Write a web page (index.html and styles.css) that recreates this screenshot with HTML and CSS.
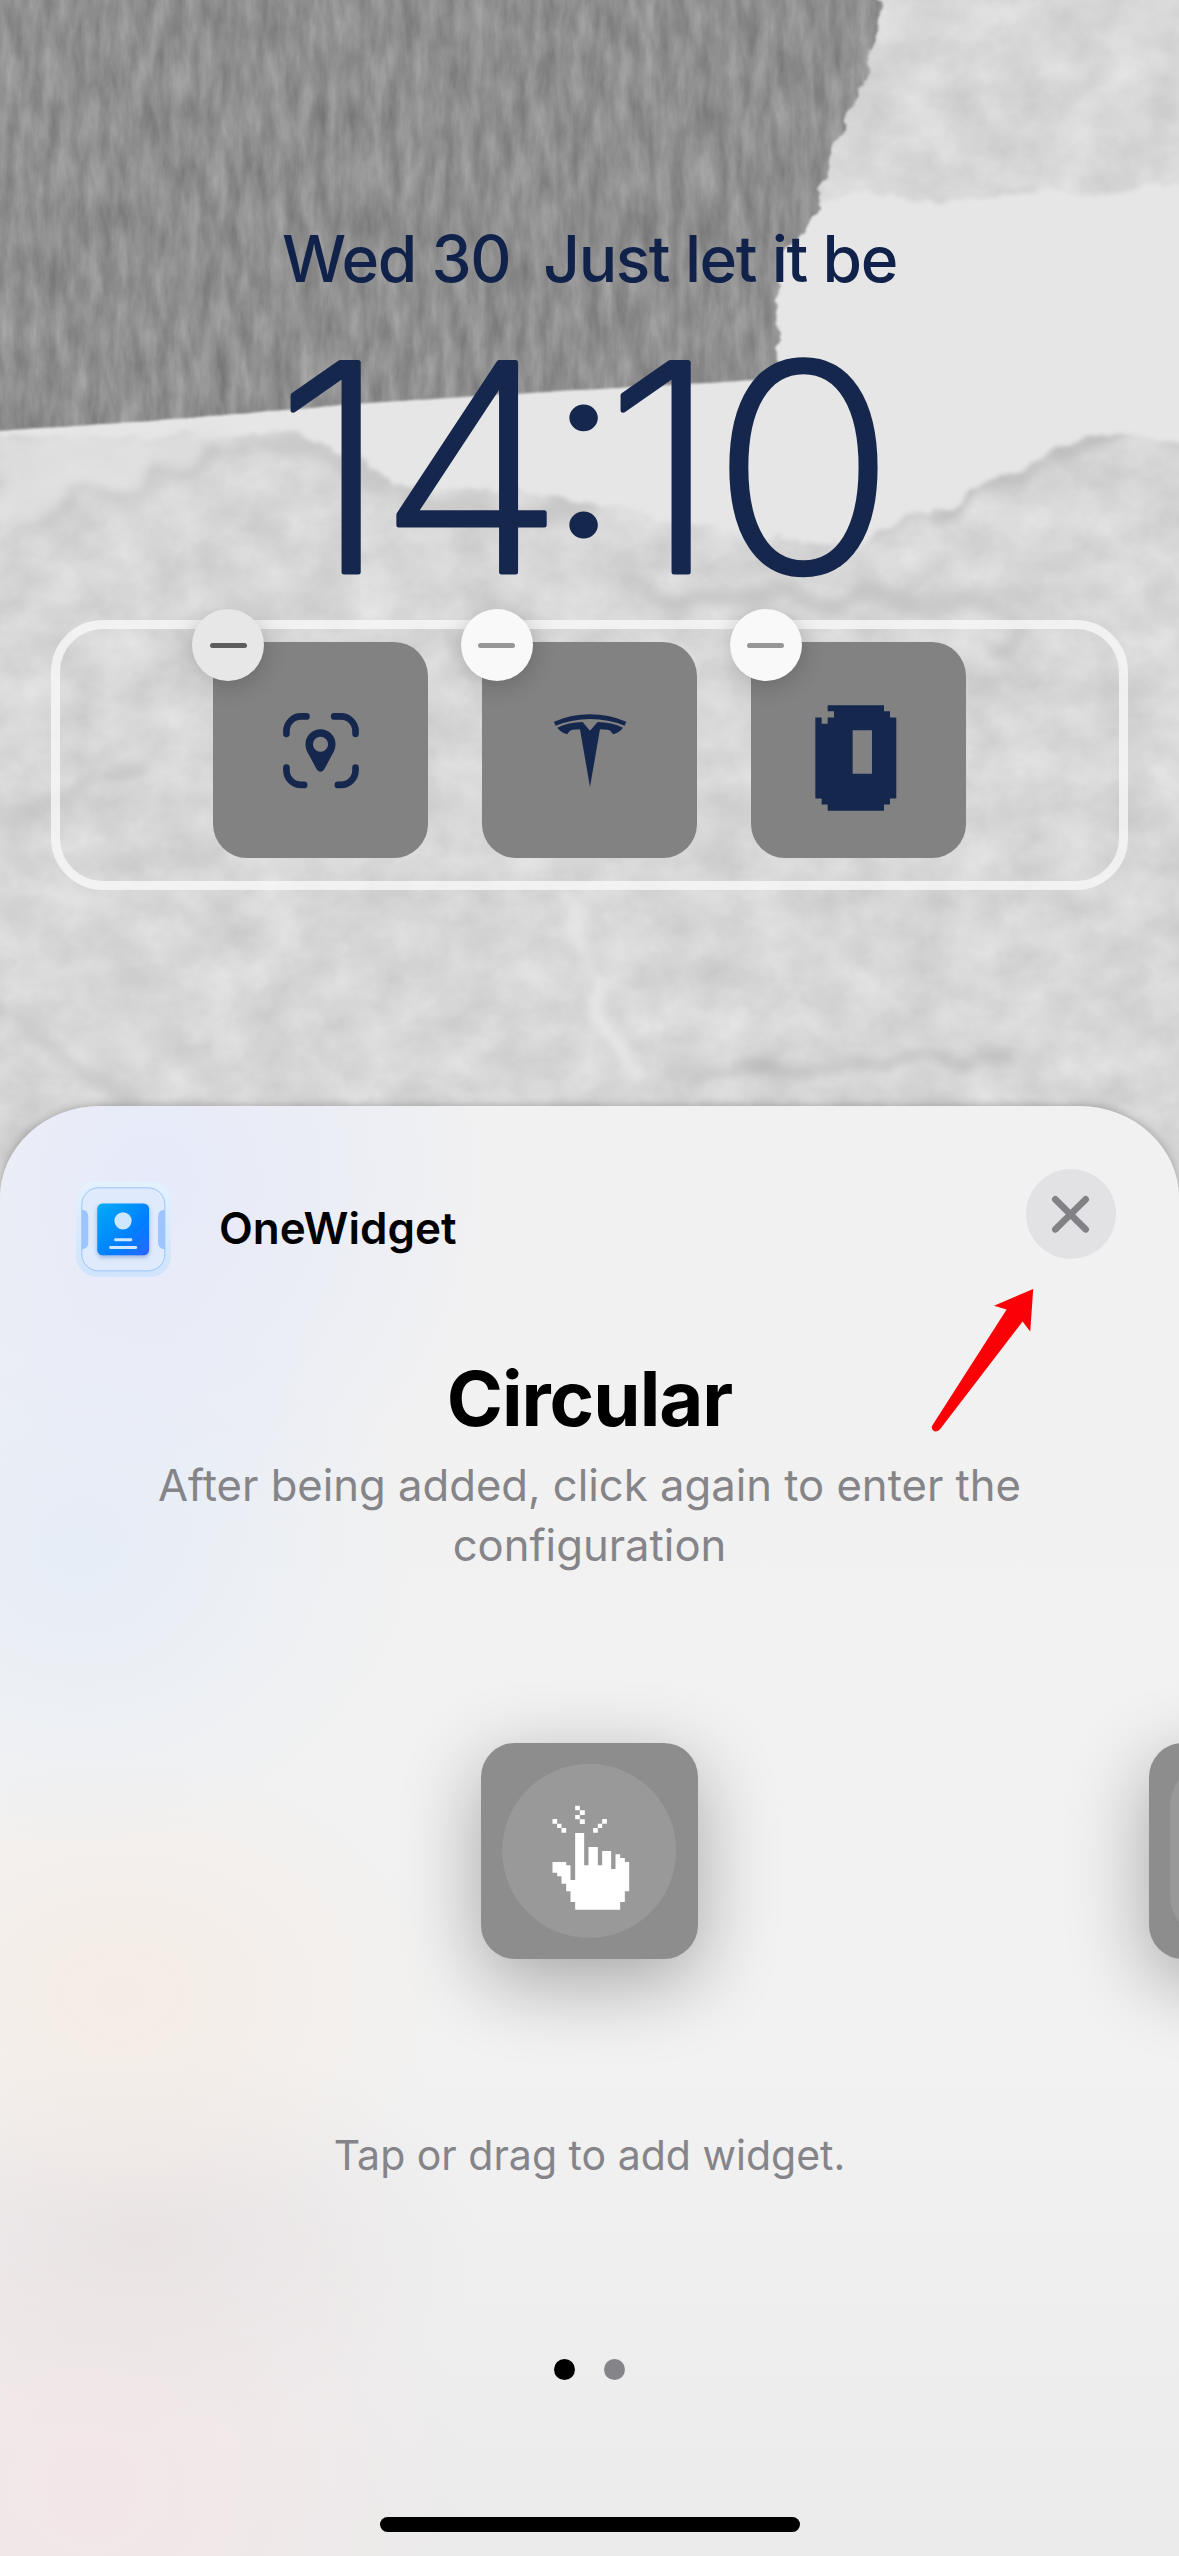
FILE: index.html
```html
<!DOCTYPE html>
<html lang="en">
<head>
<meta charset="utf-8">
<title>Lock Screen Widgets</title>
<link rel="stylesheet" href="styles.css">
</head>
<body>
<main class="screen">
  <svg class="wallpaper" viewBox="0 0 1179 1240" aria-hidden="true">
    <defs>
      <filter id="paper" x="0" y="0" width="100%" height="100%" color-interpolation-filters="sRGB">
        <feTurbulence type="fractalNoise" baseFrequency="0.02 0.024" numOctaves="5" seed="8"/>
        <feColorMatrix values=".13 0 0 0 .778  .13 0 0 0 .778  .13 0 0 0 .778  0 0 0 0 1"/>
      </filter>
      <filter id="fibre" x="-2%" y="-2%" width="104%" height="104%" color-interpolation-filters="sRGB">
        <feTurbulence type="fractalNoise" baseFrequency="0.07 0.02" numOctaves="5" seed="3" result="n"/>
        <feColorMatrix in="n" values=".23 0 0 0 .447  .23 0 0 0 .447  .23 0 0 0 .447  0 0 0 0 1" result="tex"/>
        <feTurbulence type="fractalNoise" baseFrequency="0.05" numOctaves="3" seed="5" result="edge"/>
        <feColorMatrix in="edge" values="1 0 0 0 0  0 0 0 0 .5  0 0 0 0 0  0 0 0 0 1" result="shift"/>
        <feDisplacementMap in="SourceGraphic" in2="shift" scale="20" xChannelSelector="R" yChannelSelector="G" result="shape"/>
        <feGaussianBlur in="shape" stdDeviation="0.8" result="mask"/>
        <feComposite in="tex" in2="mask" operator="in"/>
      </filter>
      <filter id="torn" x="-5%" y="-5%" width="110%" height="110%">
        <feTurbulence type="fractalNoise" baseFrequency="0.03" numOctaves="4" seed="9"/>
        <feDisplacementMap in="SourceGraphic" scale="22" xChannelSelector="R" yChannelSelector="G"/>
        <feGaussianBlur stdDeviation="2"/>
      </filter>
      <filter id="soft" x="-20%" y="-60%" width="140%" height="220%">
        <feTurbulence type="fractalNoise" baseFrequency="0.02" numOctaves="4" seed="2"/>
        <feDisplacementMap in="SourceGraphic" scale="40" xChannelSelector="R" yChannelSelector="G"/>
        <feGaussianBlur stdDeviation="6"/>
      </filter>
    </defs>
    <rect width="1179" height="1240" filter="url(#paper)"/>
    <g filter="url(#soft)" fill="none" stroke-linecap="round">
      <path d="M10 535Q130 470 270 438" stroke="#c4c4c4" stroke-width="9"/>
      <path d="M270 440Q330 450 400 490T590 500" stroke="#c8c8c8" stroke-width="16"/>
      <path d="M620 590Q740 600 900 600T1000 650" stroke="#c4c4c4" stroke-width="12"/>
      <path d="M940 520Q1010 460 1120 436" stroke="#bdbdbd" stroke-width="14"/>
      <path d="M690 1074Q850 1070 1000 1058" stroke="#b9b9b9" stroke-width="10"/>
      <path d="M560 890Q590 1010 640 1080" stroke="#e9e9e9" stroke-width="12"/>
      <path d="M0 830Q70 790 150 760" stroke="#c5c5c5" stroke-width="9"/>
      <path d="M0 1010Q70 1060 140 1100" stroke="#c6c6c6" stroke-width="12"/>
    </g>
    <path filter="url(#torn)" fill="#e6e6e6" d="M770 215L815 205L865 190L925 202L1053 190L1105 195L1200 178V440L1113 432L1053 450L1008 475L962 500L910 515L850 546L790 540L699 526L602 508L549 494L451 487L406 487L368 465L300 432L0 440V420L300 400L720 370Z"/>
    <path filter="url(#soft)" fill="#e2e2e2" d="M0 436L265 430L150 472L60 500L0 530Z" opacity=".7"/>
    <path filter="url(#fibre)" d="M-30-30H880L875 46L858 93L836 143L828 164L817 207L802 236L779 257L775 314L781 339L772 379L722 382L526 393L368 403L150 421L-30 433Z"/>
  </svg>

  <section class="lock">
    <div class="date"><span>Wed 30</span><span>Just let it be</span></div>
    <svg class="clock" viewBox="270 340 640 250" role="img" aria-label="14:10">
      <text class="clock-digits" x="258.500 356.600 514.600 569.800 671" y="572" transform="scale(1.06 1)">14<tspan class="clock-colon" dy="-35">:</tspan><tspan dy="35">10</tspan></text>
    </svg>
    <div class="widgets">
      <div class="tile">
        <svg viewBox="100 126 645 647">
          <g class="ink-line">
            <path d="M320 401v-8a44 44 0 0 1 44-44h16M463 349h20a44 44 0 0 1 44 44v8M320 502v8a44 44 0 0 0 44 44h9M527 502v8a44 44 0 0 1-44 44h-9"/>
          </g>
          <path class="ink" d="M422 387a45 45 0 0 1 45 46c0 14-6 24-12 34l-22 41q-11 13-22 0l-22-41c-6-10-12-20-12-34a45 45 0 0 1 45-46zM422 410a22.500 22.500 0 1 0 .1 0z"/>
        </svg>
        <span class="remove remove-dim"></span>
      </div>
      <div class="tile">
        <svg viewBox="-174 -174 646 646">
          <path class="ink" d="M42 64Q95 42 150 42Q205 42 259 64L254 76Q205 56 150 56Q98 56 47 76ZM52 82Q85 66 128 65L150 91L173 65Q216 66 249 82Q240 96 219 102Q214 90 203 88L180 87L150 260L120 87L98 88Q87 90 82 102Q62 96 52 82Z"/>
        </svg>
        <span class="remove"></span>
      </div>
      <div class="tile">
        <svg viewBox="512 126 646 647">
          <path class="ink" d="M742 315H911V333H929V352H948V595H929V613H911V632H742V613H724V595H705V352H724V371H742V352H761V333H742ZM817 390V521H875V390Z"/>
        </svg>
        <span class="remove"></span>
      </div>
    </div>
  </section>

  <section class="sheet">
    <header class="sheet-head">
      <svg class="app-icon" viewBox="107 122 286 288">
        <defs>
          <linearGradient id="plate" x1="0" y1="0" x2="0" y2="1"><stop offset="0" stop-color="#e4f2fe"/><stop offset="1" stop-color="#cfe3fc"/></linearGradient>
          <linearGradient id="card" x1="0" y1="0" x2="1" y2="1"><stop offset="0" stop-color="#00aef5"/><stop offset=".6" stop-color="#007fff"/><stop offset="1" stop-color="#2a66ff"/></linearGradient>
          <filter id="drop" x="-20%" y="-20%" width="140%" height="150%"><feDropShadow dx="0" dy="6" stdDeviation="7" flood-color="#4a74b8" flood-opacity=".5"/></filter>
        </defs>
        <rect x="107" y="122" width="286" height="288" rx="62" fill="url(#plate)"/>
        <rect x="124.500" y="142" width="250" height="250" rx="50" fill="#dfeafc" stroke="#9ac4fb" stroke-width="3"/>
        <path d="M124 208q20 0 20 20v79q0 20-20 20zM375 208q-21 0-21 20v79q0 20 21 20z" fill="#9cc5ff"/>
        <rect x="171" y="189" width="156" height="156" rx="16" fill="url(#card)" filter="url(#drop)"/>
        <circle cx="248.500" cy="241.500" r="26" fill="#cfe6ff"/>
        <path d="M226 298.500h46M211 321.500h76" stroke="#cfe6ff" stroke-width="9" stroke-linecap="round"/>
      </svg>
      <span class="app-name">OneWidget</span>
      <button class="close" aria-label="Close">
        <svg viewBox="378 87 270 270"><path d="M466 178L557 268M557 178L466 268"/></svg>
      </button>
    </header>
    <h1 class="title">Circular</h1>
    <p class="subtitle">After being added, click again to enter the<br>configuration</p>
    <div class="gallery">
      <div class="preview">
        <svg viewBox="123 129 650 648">
          <circle cx="447" cy="452.500" r="261" fill="#999"/>
          <path fill="#fff" d="M405 399H432V496H445V441H473V496H486V453H513V507H526V463H540V474H554V486H567V574H554V606H540V629H405V606H391V574H378V551H364V529H351V518H337V486H378V496H391V540H405ZM337 357h14v14h13v13h14v14h-14v-14h-13v-13h-14zM405 317h14v14h15v14h-15v13h15v14h-15v-14h-14v-13h14v-14h-14zM486 357h14v14h-14v13h-13v14h-14v-14h14v-13h13z"/>
        </svg>
      </div>
      <div class="preview"><span class="plate"></span></div>
    </div>
    <p class="hint">Tap or drag to add widget.</p>
    <div class="dots"><i class="dot dot-on"></i><i class="dot"></i></div>
    <div class="home-bar"></div>
    <svg class="arrow" viewBox="94 446 309 430" aria-hidden="true">
      <path d="M401 446L283 496L321 508L98 856Q92 868 104 874Q114 876 122 866L369 544L392 574Z"/>
    </svg>
  </section>
</main>
</body>
</html>
```
FILE: styles.css
```css
* { box-sizing: border-box; }
body { margin: 0; font-family: Inter, "Liberation Sans", sans-serif; }
.screen {
  position: relative;
  width: 1179px;
  height: 2556px;
  overflow: hidden;
  display: flex;
  flex-direction: column;
  background: #d8d8d8;
}
.wallpaper { position: absolute; left: 0; top: 0; width: 1179px; height: 1240px; }

.lock {
  position: relative;
  height: 1106px;
  flex: none;
  display: flex;
  flex-direction: column;
  align-items: center;
  padding-top: 219px;
}
.date {
  display: flex;
  gap: 33px;
  height: 80px;
  line-height: 80px;
  font-size: 64px;
  font-weight: 500;
  letter-spacing: -1.4px;
  color: #11224a;
  white-space: nowrap;
}
.clock { width: 640px; height: 250px; margin-top: 41px; overflow: visible; }
.clock-digits {
  font-size: 288px;
  font-weight: 200;
  fill: #16274d;
  stroke: #16274d;
  stroke-width: 5px;
  stroke-linejoin: round;
}
.clock-colon { font-size: 255px; font-weight: 300; stroke-width: 0; }
.widgets {
  width: 1077px;
  height: 270px;
  margin-top: 30px;
  border: 9px solid rgba(248, 248, 248, .78);
  border-radius: 52px;
  display: flex;
  justify-content: center;
  align-items: flex-start;
  gap: 53.5px;
  padding-top: 13px;
}
.tile {
  position: relative;
  width: 215.3px;
  height: 216px;
  border-radius: 34px;
  background: #828282;
}
.tile svg, .preview svg { display: block; width: 100%; height: 100%; }
.ink { fill: #16274d; fill-rule: evenodd; }
.ink-line { fill: none; stroke: #16274d; stroke-width: 20; stroke-linecap: round; }
.remove {
  position: absolute;
  left: -21px;
  top: -33px;
  width: 72px;
  height: 72px;
  border-radius: 50%;
  background: #f9f9f9;
  color: #969696;
  box-shadow: 0 4px 24px rgba(0, 0, 0, .2);
  display: flex;
  align-items: center;
  justify-content: center;
}
.remove::before { content: ""; width: 37px; height: 5px; border-radius: 3px; background: currentColor; }
.remove-dim { background: #e7e7e7; color: #5d5d5d; }

.sheet {
  position: relative;
  flex: 1;
  display: flex;
  flex-direction: column;
  align-items: center;
  border-radius: 100px 100px 0 0 / 92px 92px 0 0;
  overflow: hidden;
  box-shadow: 0 0 10px rgba(0, 0, 0, .28);
  background:
    radial-gradient(ellipse 350px 380px at 150px 80px, #e6eafa, rgba(230, 234, 250, 0)),
    radial-gradient(ellipse 330px 300px at 80px 440px, #e6edf7, rgba(230, 237, 247, 0)),
    radial-gradient(ellipse 330px 240px at 120px 890px, #f5ece5, rgba(245, 236, 229, 0)),
    radial-gradient(ellipse 340px 200px at 140px 1130px, #e9e3e4, rgba(233, 227, 228, 0)),
    radial-gradient(ellipse 380px 360px at 90px 1380px, #f3e6e8, rgba(243, 230, 232, 0)),
    linear-gradient(#f1f1f1, #f2f2f2 65%, #ebebeb);
}
.sheet-head {
  width: 100%;
  height: 170px;
  display: flex;
  align-items: flex-start;
  padding: 63px 63px 0 76px;
}
.app-icon { width: 95px; height: 96px; margin-top: 12px; }
.app-name {
  margin: 29px 0 0 48px;
  line-height: 60px;
  font-size: 44px;
  font-weight: 600;
  letter-spacing: 0;
  color: #000;
}
.close {
  width: 90px;
  height: 90px;
  margin-left: auto;
  padding: 0;
  border: 0;
  border-radius: 50%;
  background: #e2e2e4;
}
.close svg { display: block; width: 90px; height: 90px; fill: none; stroke: #828286; stroke-width: 20; stroke-linecap: round; }
.title {
  margin: 72px 0 0;
  height: 100px;
  line-height: 100px;
  font-size: 76px;
  font-weight: 700;
  letter-spacing: -1px;
  color: #000;
}
.subtitle {
  margin: 8px 0 0;
  height: 120px;
  line-height: 60px;
  font-size: 43.6px;
  text-align: center;
  color: #858589;
}
.gallery {
  display: flex;
  gap: 451px;
  width: 217px;
  height: 216px;
  margin-top: 167px;
}
.preview {
  flex: none;
  width: 217px;
  height: 216px;
  border-radius: 34px;
  background: #8d8d8d;
  box-shadow: 0 22px 80px rgba(0, 0, 0, .32);
}
.plate { display: block; width: 174px; height: 174px; margin: 21px; border-radius: 42px; background: #999; }
.hint {
  margin: 166px 0 0;
  height: 60px;
  line-height: 60px;
  font-size: 41px;
  color: #858589;
}
.dots { display: flex; gap: 29px; margin-top: 174px; }
.dot { width: 21px; height: 21px; border-radius: 50%; background: #858589; }
.dot-on { background: #000; }
.home-bar { width: 420px; height: 15px; margin-top: 137px; border-radius: 8px; background: #000; }
.arrow { position: absolute; left: 931px; top: 183px; width: 103px; height: 143px; fill: #fb0007; }
```
